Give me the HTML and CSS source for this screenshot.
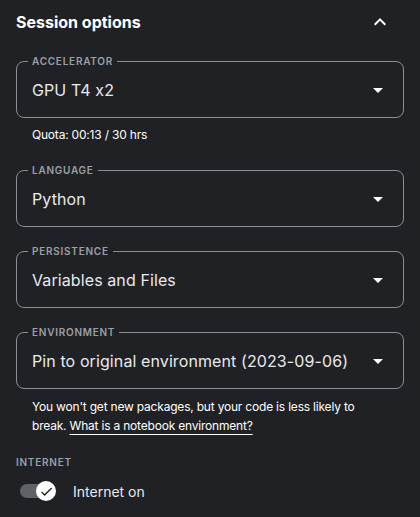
FILE: index.html
```html
<!DOCTYPE html>
<html lang="en">
<head>
<meta charset="utf-8">
<title>Session options</title>
<link rel="stylesheet" href="styles.css">
</head>
<body>
<section class="panel">
  <header class="panel-head">
    <h2 class="panel-title">Session options</h2>
    <button class="icon-btn" aria-label="Collapse">
      <svg viewBox="0 0 24 24" width="24" height="24"><path d="M12 8l-6 6 1.41 1.41L12 10.83l4.59 4.58L18 14z" fill="currentColor"/></svg>
    </button>
  </header>

  <fieldset class="field">
    <legend class="field-label">Accelerator</legend>
    <div class="field-row">
      <span class="field-value">GPU T4 x2</span>
      <svg class="caret" viewBox="0 0 24 24" width="24" height="24"><path d="M7 10l5 5 5-5z" fill="currentColor"/></svg>
    </div>
  </fieldset>
  <p class="hint hint-quota">Quota: 00:13 / 30 hrs</p>

  <fieldset class="field">
    <legend class="field-label">Language</legend>
    <div class="field-row">
      <span class="field-value">Python</span>
      <svg class="caret" viewBox="0 0 24 24" width="24" height="24"><path d="M7 10l5 5 5-5z" fill="currentColor"/></svg>
    </div>
  </fieldset>

  <fieldset class="field">
    <legend class="field-label">Persistence</legend>
    <div class="field-row">
      <span class="field-value">Variables and Files</span>
      <svg class="caret" viewBox="0 0 24 24" width="24" height="24"><path d="M7 10l5 5 5-5z" fill="currentColor"/></svg>
    </div>
  </fieldset>

  <fieldset class="field">
    <legend class="field-label">Environment</legend>
    <div class="field-row">
      <span class="field-value">Pin to original environment (2023-09-06)</span>
      <svg class="caret" viewBox="0 0 24 24" width="24" height="24"><path d="M7 10l5 5 5-5z" fill="currentColor"/></svg>
    </div>
  </fieldset>
  <p class="hint hint-env">You won't get new packages, but your code is less likely to break. <a class="link" href="#">What is a notebook environment?</a></p>

  <div class="section-label">Internet</div>
  <label class="toggle-row">
    <span class="switch">
      <span class="knob">
        <svg viewBox="0 0 24 24" width="15" height="15"><path d="M9 16.17L4.83 12l-1.42 1.41L9 19 21 7l-1.41-1.41z" fill="currentColor"/></svg>
      </span>
    </span>
    <span class="toggle-text">Internet on</span>
  </label>
</section>
</body>
</html>
```

FILE: styles.css
```css
* { box-sizing: border-box; }
html, body {
  margin: 0;
  padding: 0;
  background: #202124;
}
body {
  font-family: Inter, "Noto Sans", sans-serif;
  font-feature-settings: "calt" 0;
  color: #e8eaed;
}
.panel {
  padding: 0 16px;
  display: flex;
  flex-direction: column;
}
.panel-head {
  display: flex;
  align-items: center;
  justify-content: space-between;
  height: 44px;
}
.panel-title {
  margin: 0;
  font-size: 16px;
  font-weight: 700;
  color: #ffffff;
}
.icon-btn {
  background: none;
  border: 0;
  padding: 0;
  margin-right: 12px;
  color: #ffffff;
  display: flex;
  width: 24px;
  height: 24px;
}
.field {
  margin: 16px 0 0 0;
  padding: 0 11px 7px 11px;
  border: 1px solid #8a8e93;
  border-radius: 8px;
  min-width: 0;
}
.panel-head + .field {
  margin-top: 9px;
}
.field-label {
  padding: 0 4px;
  font-size: 10px;
  line-height: 16px;
  font-weight: 600;
  letter-spacing: 0.75px;
  text-transform: uppercase;
  color: #9aa0a6;
}
.field-row {
  display: flex;
  align-items: center;
  justify-content: space-between;
  height: 41px;
  padding-left: 4px;
}
.field-value {
  font-size: 16px;
  letter-spacing: 0.1px;
  color: #e8eaed;
}
.caret {
  color: #ffffff;
  margin-right: 2px;
}
.hint {
  margin: 0;
  padding-left: 16px;
  font-size: 12px;
  line-height: 19px;
  letter-spacing: -0.2px;
  color: #ffffff;
}
.hint-quota {
  margin-top: 7px;
  margin-bottom: 2px;
}
.hint-env {
  margin-top: 8px;
  padding-right: 32px;
}
.link {
  color: #ffffff;
  text-decoration: underline;
  text-decoration-thickness: 1px;
  text-underline-offset: 4px;
}
.section-label {
  margin-top: 19px;
  font-size: 10px;
  line-height: 16px;
  font-weight: 600;
  letter-spacing: 0.75px;
  text-transform: uppercase;
  color: #9aa0a6;
}
.toggle-row {
  display: flex;
  align-items: center;
  margin-top: 9px;
  height: 24px;
}
.switch {
  position: relative;
  display: block;
  width: 32px;
  height: 14px;
  margin-left: 4px;
  border-radius: 7px;
  background: #5f6368;
}
.knob {
  position: absolute;
  right: -4px;
  top: -3px;
  width: 20px;
  height: 20px;
  border-radius: 50%;
  background: #ffffff;
  color: #202124;
  display: flex;
  align-items: center;
  justify-content: center;
}
.toggle-text {
  margin-left: 21px;
  font-size: 14px;
  color: #e8eaed;
}
```
